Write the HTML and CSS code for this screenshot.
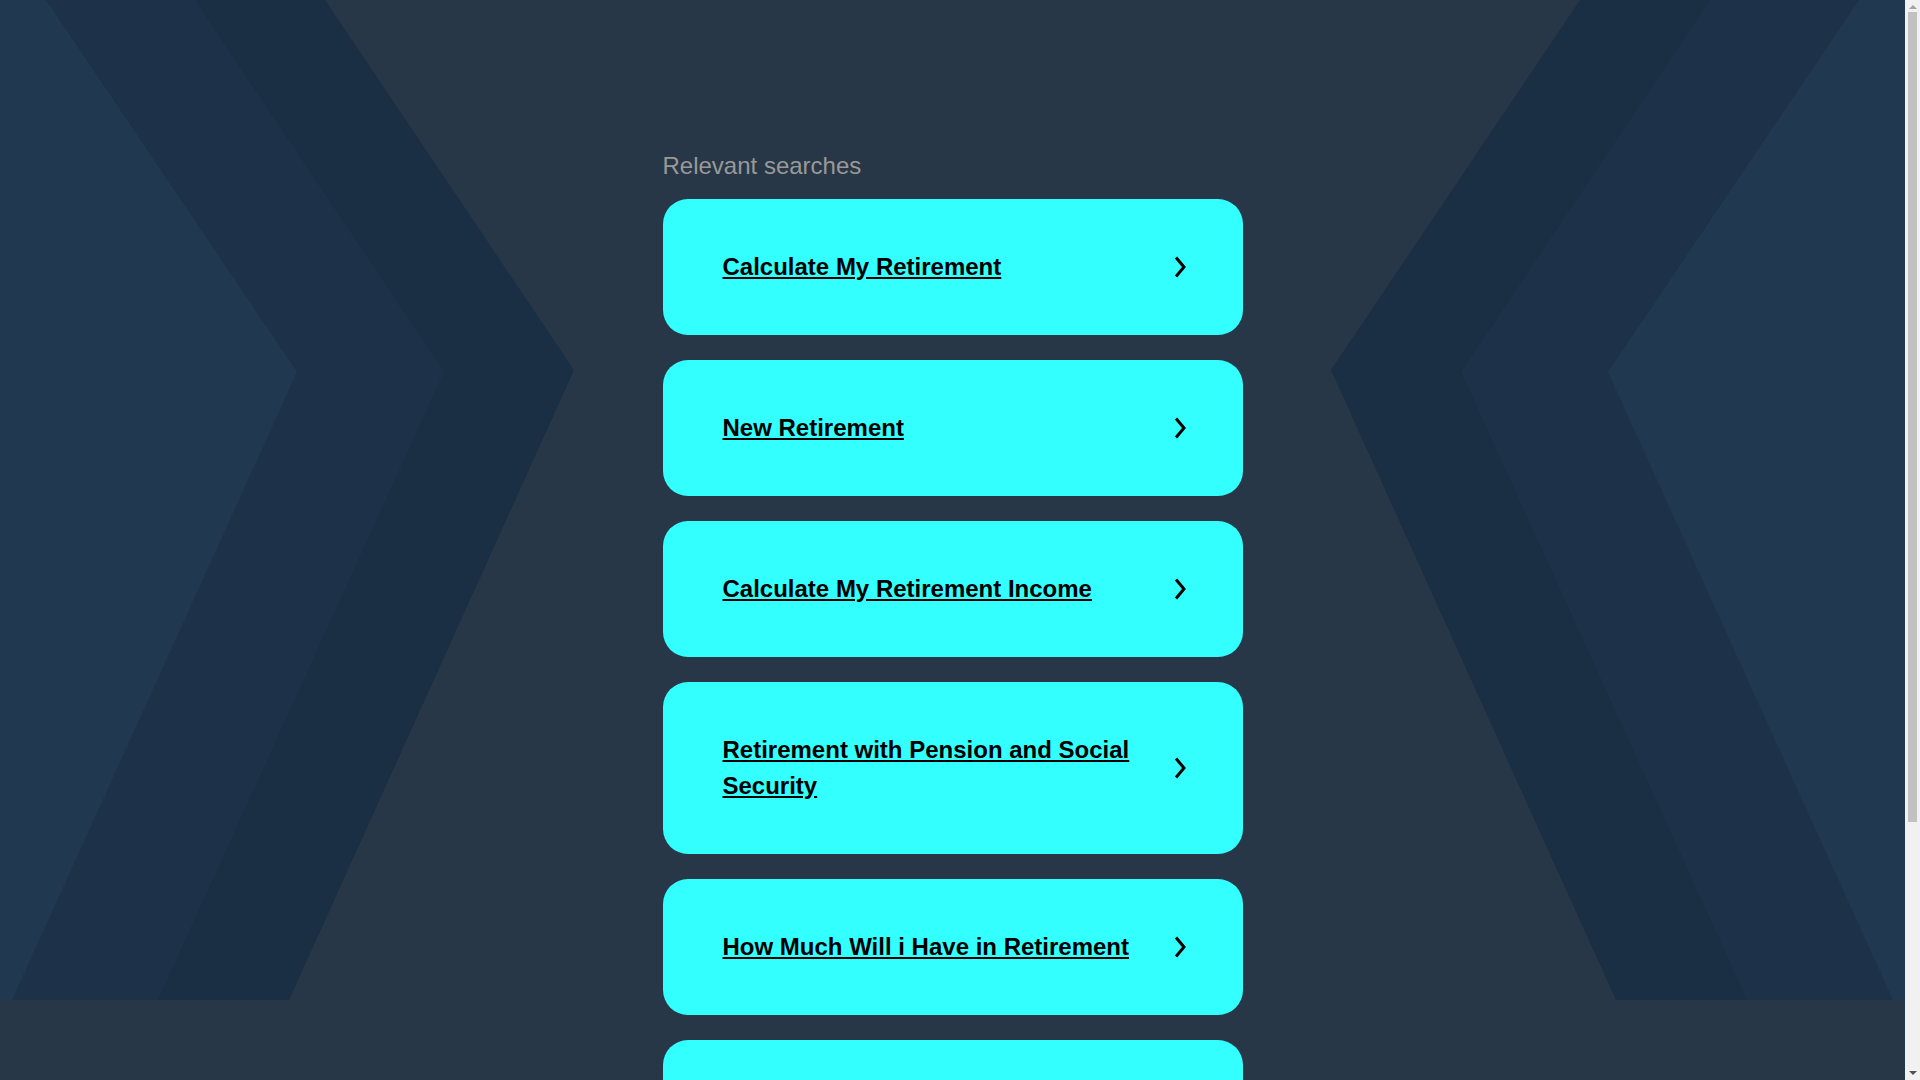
FILE: index.html
```html
<!DOCTYPE html>
<html lang="en">
<head>
<meta charset="utf-8">
<title>Relevant searches</title>
<link rel="stylesheet" href="styles.css">
</head>
<body>
<div class="viewport">
  <div class="backdrop" aria-hidden="true">
    <svg class="backdrop-art" viewBox="0 0 1905 1000" preserveAspectRatio="none">
      <polygon class="band-outer" points="0,0 325,0 574,370 289,1000 0,1000"/>
      <polygon class="band-mid" points="0,0 195,0 444,372 158,1000 0,1000"/>
      <polygon class="band-inner" points="0,0 46,0 297,372 12,1000 0,1000"/>
      <polygon class="band-outer" points="1905,0 1580,0 1331,370 1616,1000 1905,1000"/>
      <polygon class="band-mid" points="1905,0 1710,0 1461,372 1747,1000 1905,1000"/>
      <polygon class="band-inner" points="1905,0 1859,0 1608,372 1893,1000 1905,1000"/>
    </svg>
  </div>
  <main class="page">
    <section class="searches">
      <h2 class="searches-title">Relevant searches</h2>
      <ul class="search-list">
        <li class="search-card">
          <a class="search-link" href="#">Calculate My Retirement</a>
          <svg class="chevron" viewBox="0 0 20 24"><path d="M9 2.5 L17 12 L9 21.5"/></svg>
        </li>
        <li class="search-card">
          <a class="search-link" href="#">New Retirement</a>
          <svg class="chevron" viewBox="0 0 20 24"><path d="M9 2.5 L17 12 L9 21.5"/></svg>
        </li>
        <li class="search-card">
          <a class="search-link" href="#">Calculate My Retirement Income</a>
          <svg class="chevron" viewBox="0 0 20 24"><path d="M9 2.5 L17 12 L9 21.5"/></svg>
        </li>
        <li class="search-card">
          <a class="search-link" href="#">Retirement with Pension and Social Security</a>
          <svg class="chevron" viewBox="0 0 20 24"><path d="M9 2.5 L17 12 L9 21.5"/></svg>
        </li>
        <li class="search-card">
          <a class="search-link" href="#">How Much Will i Have in Retirement</a>
          <svg class="chevron" viewBox="0 0 20 24"><path d="M9 2.5 L17 12 L9 21.5"/></svg>
        </li>
        <li class="search-card">
          <a class="search-link" href="#">Retirement Planning Calculator</a>
          <svg class="chevron" viewBox="0 0 20 24"><path d="M9 2.5 L17 12 L9 21.5"/></svg>
        </li>
      </ul>
    </section>
  </main>
</div>
<div class="scrollbar" aria-hidden="true">
  <span class="scroll-arrow scroll-up"></span>
  <span class="scroll-thumb"></span>
  <span class="scroll-arrow scroll-down"></span>
</div>
</body>
</html>
```

FILE: styles.css
```css
html, body {
  margin: 0;
  padding: 0;
}

html {
  scrollbar-width: none;
}

body {
  background: #273747;
  font-family: "Liberation Sans", Arial, sans-serif;
}

.viewport {
  position: relative;
  width: calc(100% - 15px);
  min-height: 1400px;
}

.backdrop {
  position: absolute;
  top: 0;
  left: 0;
  width: 100%;
  height: 1000px;
  z-index: 0;
  overflow: hidden;
}

.backdrop-art {
  display: block;
  width: 100%;
  height: 100%;
}

.band-outer { fill: #1a2e44; }
.band-mid { fill: #1d3249; }
.band-inner { fill: #203950; }

.page {
  position: relative;
  z-index: 1;
  display: flex;
  justify-content: center;
  padding-top: 148px;
  padding-bottom: 200px;
}

.searches {
  width: 580px;
}

.searches-title {
  margin: 0 0 15px 0;
  font-size: 24px;
  line-height: 36px;
  font-weight: normal;
  color: #999999;
}

.search-list {
  list-style: none;
  margin: 0;
  padding: 0;
  display: flex;
  flex-direction: column;
  gap: 25px;
}

.search-card {
  display: flex;
  align-items: center;
  justify-content: space-between;
  gap: 20px;
  background: #33ffff;
  border-radius: 25px;
  padding: 50px 56px 50px 60px;
}

.search-link {
  color: #000000;
  font-size: 24px;
  line-height: 36px;
  font-weight: bold;
  text-decoration: underline;
}

.chevron {
  flex: none;
  width: 20px;
  height: 24px;
  fill: none;
  stroke: #000000;
  stroke-width: 3;
  stroke-linejoin: miter;
}

.scrollbar {
  position: fixed;
  top: 0;
  right: 0;
  width: 15px;
  height: 100vh;
  background: #f1f1f1;
  display: flex;
  flex-direction: column;
  align-items: center;
  z-index: 5;
}

.scroll-thumb {
  display: block;
  width: 9px;
  flex: none;
  height: 810px;
  margin-top: 3px;
  background: #c1c1c1;
}

.scroll-arrow {
  display: block;
  flex: none;
  width: 0;
  height: 0;
  border-left: 4px solid transparent;
  border-right: 4px solid transparent;
}

.scroll-up {
  margin-top: 5px;
  border-bottom: 4px solid #a3a3a3;
}

.scroll-down {
  margin-top: auto;
  margin-bottom: 5px;
  border-top: 4px solid #505050;
}
```
